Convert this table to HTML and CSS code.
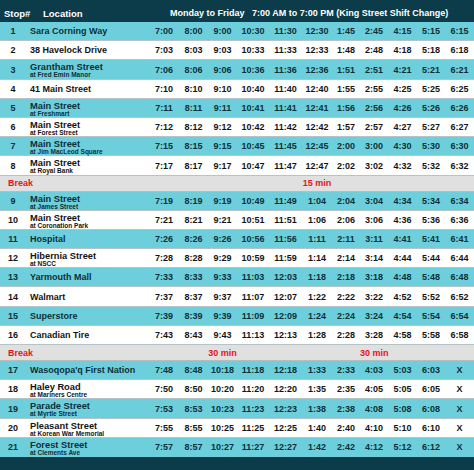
FILE: index.html
```html
<!DOCTYPE html>
<html>
<head>
<meta charset="utf-8">
<link rel="stylesheet" href="styles.css">
</head>
<body>
<div class="tt">
  <div class="head">
    <span class="hstop">Stop#</span>
    <span class="hloc">Location</span>
    <span class="htitle">Monday to Friday   7:00 AM to 7:00 PM (King Street Shift Change)</span>
  </div>

  <div class="row cy"><span class="stop">1</span><span class="loc">Sara Corning Way</span><span>7:00</span><span>8:00</span><span>9:00</span><span>10:30</span><span>11:30</span><span>12:30</span><span>1:45</span><span>2:45</span><span>4:15</span><span>5:15</span><span>6:15</span></div>
  <div class="row wh"><span class="stop">2</span><span class="loc">38 Havelock Drive</span><span>7:03</span><span>8:03</span><span>9:03</span><span>10:33</span><span>11:33</span><span>12:33</span><span>1:48</span><span>2:48</span><span>4:18</span><span>5:18</span><span>6:18</span></div>
  <div class="row cy"><span class="stop">3</span><span class="loc two"><b>Grantham Street</b><i>at Fred Emin Manor</i></span><span>7:06</span><span>8:06</span><span>9:06</span><span>10:36</span><span>11:36</span><span>12:36</span><span>1:51</span><span>2:51</span><span>4:21</span><span>5:21</span><span>6:21</span></div>
  <div class="row wh"><span class="stop">4</span><span class="loc">41 Main Street</span><span>7:10</span><span>8:10</span><span>9:10</span><span>10:40</span><span>11:40</span><span>12:40</span><span>1:55</span><span>2:55</span><span>4:25</span><span>5:25</span><span>6:25</span></div>
  <div class="row cy"><span class="stop">5</span><span class="loc two"><b>Main Street</b><i>at Freshmart</i></span><span>7:11</span><span>8:11</span><span>9:11</span><span>10:41</span><span>11:41</span><span>12:41</span><span>1:56</span><span>2:56</span><span>4:26</span><span>5:26</span><span>6:26</span></div>
  <div class="row wh"><span class="stop">6</span><span class="loc two"><b>Main Street</b><i>at Forest Street</i></span><span>7:12</span><span>8:12</span><span>9:12</span><span>10:42</span><span>11:42</span><span>12:42</span><span>1:57</span><span>2:57</span><span>4:27</span><span>5:27</span><span>6:27</span></div>
  <div class="row cy"><span class="stop">7</span><span class="loc two"><b>Main Street</b><i>at Jim MacLeod Square</i></span><span>7:15</span><span>8:15</span><span>9:15</span><span>10:45</span><span>11:45</span><span>12:45</span><span>2:00</span><span>3:00</span><span>4:30</span><span>5:30</span><span>6:30</span></div>
  <div class="row wh"><span class="stop">8</span><span class="loc two"><b>Main Street</b><i>at Royal Bank</i></span><span>7:17</span><span>8:17</span><span>9:17</span><span>10:47</span><span>11:47</span><span>12:47</span><span>2:02</span><span>3:02</span><span>4:32</span><span>5:32</span><span>6:32</span></div>

  <div class="brk"><span class="blabel">Break</span><span class="c6">15 min</span></div>

  <div class="row cy"><span class="stop">9</span><span class="loc two"><b>Main Street</b><i>at James Street</i></span><span>7:19</span><span>8:19</span><span>9:19</span><span>10:49</span><span>11:49</span><span>1:04</span><span>2:04</span><span>3:04</span><span>4:34</span><span>5:34</span><span>6:34</span></div>
  <div class="row wh"><span class="stop">10</span><span class="loc two"><b>Main Street</b><i>at Coronation Park</i></span><span>7:21</span><span>8:21</span><span>9:21</span><span>10:51</span><span>11:51</span><span>1:06</span><span>2:06</span><span>3:06</span><span>4:36</span><span>5:36</span><span>6:36</span></div>
  <div class="row cy"><span class="stop">11</span><span class="loc">Hospital</span><span>7:26</span><span>8:26</span><span>9:26</span><span>10:56</span><span>11:56</span><span>1:11</span><span>2:11</span><span>3:11</span><span>4:41</span><span>5:41</span><span>6:41</span></div>
  <div class="row wh"><span class="stop">12</span><span class="loc two"><b>Hibernia Street</b><i>at NSCC</i></span><span>7:28</span><span>8:28</span><span>9:29</span><span>10:59</span><span>11:59</span><span>1:14</span><span>2:14</span><span>3:14</span><span>4:44</span><span>5:44</span><span>6:44</span></div>
  <div class="row cy"><span class="stop">13</span><span class="loc">Yarmouth Mall</span><span>7:33</span><span>8:33</span><span>9:33</span><span>11:03</span><span>12:03</span><span>1:18</span><span>2:18</span><span>3:18</span><span>4:48</span><span>5:48</span><span>6:48</span></div>
  <div class="row wh"><span class="stop">14</span><span class="loc">Walmart</span><span>7:37</span><span>8:37</span><span>9:37</span><span>11:07</span><span>12:07</span><span>1:22</span><span>2:22</span><span>3:22</span><span>4:52</span><span>5:52</span><span>6:52</span></div>
  <div class="row cy"><span class="stop">15</span><span class="loc">Superstore</span><span>7:39</span><span>8:39</span><span>9:39</span><span>11:09</span><span>12:09</span><span>1:24</span><span>2:24</span><span>3:24</span><span>4:54</span><span>5:54</span><span>6:54</span></div>
  <div class="row wh"><span class="stop">16</span><span class="loc">Canadian Tire</span><span>7:43</span><span>8:43</span><span>9:43</span><span>11:13</span><span>12:13</span><span>1:28</span><span>2:28</span><span>3:28</span><span>4:58</span><span>5:58</span><span>6:58</span></div>

  <div class="brk"><span class="blabel">Break</span><span class="c3">30 min</span><span class="c8">30 min</span></div>

  <div class="row cy"><span class="stop">17</span><span class="loc">Wasoqopa'q First Nation</span><span>7:48</span><span>8:48</span><span>10:18</span><span>11:18</span><span>12:18</span><span>1:33</span><span>2:33</span><span>4:03</span><span>5:03</span><span>6:03</span><span>X</span></div>
  <div class="row wh"><span class="stop">18</span><span class="loc two"><b>Haley Road</b><i>at Mariners Centre</i></span><span>7:50</span><span>8:50</span><span>10:20</span><span>11:20</span><span>12:20</span><span>1:35</span><span>2:35</span><span>4:05</span><span>5:05</span><span>6:05</span><span>X</span></div>
  <div class="row cy"><span class="stop">19</span><span class="loc two"><b>Parade Street</b><i>at Myrtle Street</i></span><span>7:53</span><span>8:53</span><span>10:23</span><span>11:23</span><span>12:23</span><span>1:38</span><span>2:38</span><span>4:08</span><span>5:08</span><span>6:08</span><span>X</span></div>
  <div class="row wh"><span class="stop">20</span><span class="loc two"><b>Pleasant Street</b><i>at Korean War Memorial</i></span><span>7:55</span><span>8:55</span><span>10:25</span><span>11:25</span><span>12:25</span><span>1:40</span><span>2:40</span><span>4:10</span><span>5:10</span><span>6:10</span><span>X</span></div>
  <div class="row cy last"><span class="stop">21</span><span class="loc two"><b>Forest Street</b><i>at Clements Ave</i></span><span>7:57</span><span>8:57</span><span>10:27</span><span>11:27</span><span>12:27</span><span>1:42</span><span>2:42</span><span>4:12</span><span>5:12</span><span>6:12</span><span>X</span></div>

  <div class="foot"></div>
</div>
</body>
</html>
```

FILE: styles.css
```css
html, body {
  margin: 0;
  padding: 0;
}
body {
  width: 474px;
  height: 470px;
  overflow: hidden;
  background: #ffffff;
  font-family: "Liberation Sans", Arial, sans-serif;
  font-weight: bold;
}
.tt {
  display: flex;
  flex-direction: column;
}
.head,
.row,
.brk {
  display: grid;
  grid-template-columns: 26px 123px 30px 29px 29px 32px 33px 30px 28px 28px 29px 28px 29px;
  align-items: center;
  box-sizing: border-box;
  white-space: nowrap;
}
.head {
  height: 22px;
  padding-top: 4px;
  background: #0c3c4a;
  color: #ffffff;
  font-size: 9.5px;
}
.hstop {
  padding-left: 4px;
  grid-column: 1 / 2;
}
.hloc {
  grid-column: 2 / 3;
  padding-left: 17px;
}
.htitle {
  grid-column: 3 / -1;
  padding-left: 21px;
  font-size: 9px;
  white-space: pre;
}
.row {
  height: 19.2px;
  border-bottom: 1px solid #b4c4c7;
  font-size: 9px;
  text-align: center;
}
.row.cy {
  background: #6dcfdb;
  color: #0d2f39;
}
.row.wh {
  background: #ffffff;
  color: #141414;
}
.row.last {
  border-bottom: none;
}
.stop {
  text-align: center;
}
.loc {
  text-align: left;
  padding-left: 4px;
}
.loc.two {
  align-self: start;
  padding-top: 2px;
}
.loc b {
  display: block;
  line-height: 10px;
  font-size: 9.3px;
}
.loc i {
  display: block;
  font-style: normal;
  font-size: 6.5px;
  line-height: 6.5px;
}
.brk {
  height: 16px;
  background: #e0e0e0;
  border-bottom: 1px solid #b8bcbd;
  color: #e3141c;
  font-size: 9px;
  text-align: center;
}
.brk span {
  overflow: visible;
}
.blabel {
  grid-column: 1 / 3;
  text-align: left;
  padding-left: 8px;
}
.c3 { grid-column: 5 / 6; }
.c6 { grid-column: 8 / 9; }
.c8 { grid-column: 10 / 11; }
.foot {
  height: 13px;
  background: #0c3c4a;
}
```
